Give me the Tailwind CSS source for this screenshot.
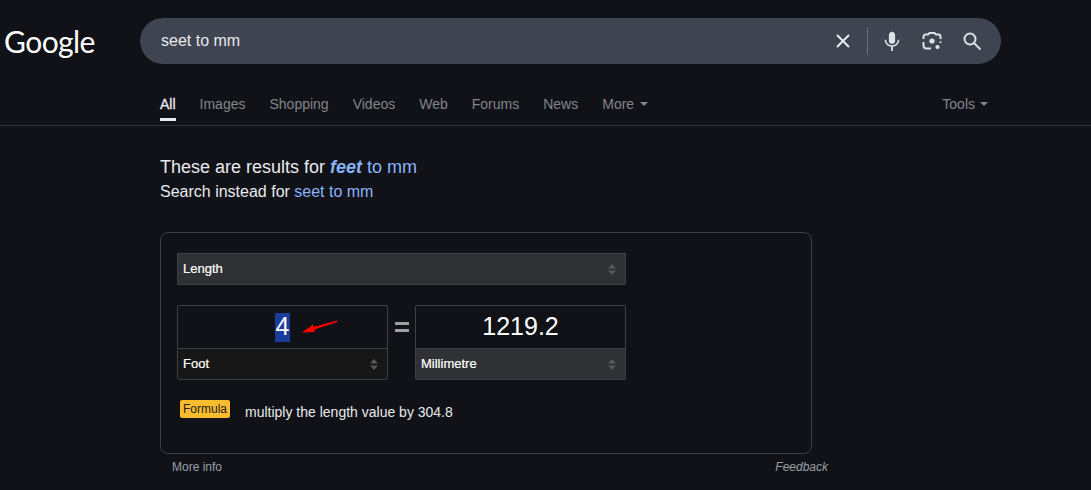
<!DOCTYPE html>
<html lang="en">
<head>
    <meta charset="UTF-8">
    <meta name="viewport" content="width=device-width, initial-scale=1.0">
    <title>seet to mm - Google Search</title>
    <script src="https://cdn.jsdelivr.net/npm/@tailwindcss/browser@4"></script>
</head>
<body class="h-[490px] overflow-hidden bg-[#101218] font-['Liberation_Sans',Arial,sans-serif] text-[#e8eaed]">

    <!-- search header -->
    <header class="flex items-center pt-[18px]">
        <div class="w-[140px] pl-[4px] font-['Lato',sans-serif] text-[30px] leading-[46px] tracking-[-0.55px] text-white">Google</div>
        <div class="flex h-[46px] w-[861px] items-center rounded-full bg-[#3f4451] pl-[21px] pr-[19px]">
            <span class="flex-1 text-base text-[#e8eaed]">seet to mm</span>
            <svg class="h-[16px] w-[16px]" viewBox="0 0 16 16" fill="none" stroke="#e8eaed" stroke-width="2"><path d="M2 2l12 12M14 2L2 14"/></svg>
            <div class="ml-[16px] mr-[13px] h-[28px] w-px bg-[#6b6f7a]"></div>
            <svg class="h-[22px] w-[22px]" viewBox="0 0 24 24" fill="#dfe1e5"><path d="M12 15c1.900 0 3.400-1.500 3.400-3.400V5.400C15.400 3.500 13.900 2 12 2S8.600 3.500 8.600 5.400v6.200C8.600 13.500 10.100 15 12 15z"/><path d="M18.300 10.600c0 3.600-2.900 6-6.300 6s-6.300-2.400-6.300-6H4c0 4.100 3.200 7.300 7 7.800V23h2v-4.600c3.800-.5 7-3.700 7-7.800h-1.700z"/></svg>
            <svg class="ml-[19px] h-[20px] w-[20px]" viewBox="0 0 20 20" fill="none" stroke="#dfe1e5" stroke-width="2"><path d="M1.500 8V5.500a2 2 0 0 1 2-2h2.500l1.500-1.500h5l1.500 1.500h2.500a2 2 0 0 1 2 2V8"/><path d="M1.500 11v3.500a3 3 0 0 0 3 3H9"/><path d="M18.500 10.500V12"/><circle cx="10" cy="10" r="2.600" fill="#dfe1e5" stroke="none"/><circle cx="15.500" cy="16" r="2.100" fill="#dfe1e5" stroke="none"/></svg>
            <svg class="ml-[20px] h-[20px] w-[20px]" viewBox="0 0 20 20" fill="none" stroke="#dfe1e5" stroke-width="2"><circle cx="8" cy="8" r="5.500"/><path d="M12 12l6.500 6.500"/></svg>
        </div>
    </header>

    <!-- tabs -->
    <nav class="flex h-[62px] items-start justify-between border-b border-[#2f3136] pl-[160px] pr-[103px] text-sm text-[#82858b]">
        <div class="flex gap-6 pt-[30px]">
            <a class="relative text-[#e8eaed] [-webkit-text-stroke:0.3px_#e8eaed]">All<span class="absolute left-0 top-[24px] h-[3px] w-[16px] bg-[#e8eaed]"></span></a>
            <a>Images</a>
            <a>Shopping</a>
            <a>Videos</a>
            <a>Web</a>
            <a>Forums</a>
            <a>News</a>
            <a class="flex items-center gap-[6px]">More <span class="h-0 w-0 border-x-[4px] border-t-[4px] border-x-transparent border-t-[#82858b]"></span></a>
        </div>
        <a class="flex items-center gap-[5px] pt-[30px]">Tools <span class="h-0 w-0 border-x-[4px] border-t-[4px] border-x-transparent border-t-[#82858b]"></span></a>
    </nav>

    <main class="pl-[160px] pt-[29px]">
        <p class="text-lg leading-6 text-[#e8eaed]">These are results for <a class="text-[#8ab4f8]"><b class="italic">feet</b> to mm</a></p>
        <p class="mt-px text-base leading-6 text-[#e8eaed]">Search instead for <a class="text-[#8ab4f8]">seet to mm</a></p>

        <!-- unit converter -->
        <section class="mt-[28px] h-[222px] w-[652px] rounded-lg border border-[#3c4043] px-4 pt-5">
            <div class="flex h-[32px] w-[449px] items-center justify-between border border-[#3c4043] bg-[#303134] pl-[5px] pr-[9px] text-[13px] text-white [-webkit-text-stroke:0.2px_#fff]">
                Length
                <svg class="h-[11px] w-[8px]" viewBox="0 0 8 11" fill="#55585c"><path d="M4 0l4 4.500H0zM4 11L0 6.500h8z"/></svg>
            </div>

            <div class="mt-5 flex w-[449px] items-start justify-between">
                <div class="h-[75px] w-[211px] overflow-hidden rounded-[2px] border border-[#3c4043]">
                    <div class="relative flex h-[43px] items-center justify-center border-b border-[#3c4043] text-[25px] text-white">
                        <span class="flex h-[29px] w-[15px] items-center justify-center bg-[#1a3c9c]">4</span>
                        <svg class="absolute left-[124px] top-[14px] h-[13px] w-[36px]" viewBox="0 0 36 13" fill="#ff0000"><path d="M0 12.500L11 4.500 11.500 7 35 .5 35.500 2 12.500 9.500 13 12z"/></svg>
                    </div>
                    <div class="flex h-[30px] items-center justify-between bg-[#171717] pl-[5px] pr-[9px] text-[13px] text-white [-webkit-text-stroke:0.2px_#fff]">
                        Foot
                        <svg class="h-[11px] w-[8px]" viewBox="0 0 8 11" fill="#55585c"><path d="M4 0l4 4.500H0zM4 11L0 6.500h8z"/></svg>
                    </div>
                </div>

                <svg class="mt-[17px] h-[10px] w-[14px]" viewBox="0 0 14 10" fill="#9aa0a6"><path d="M0 0h14v3H0zM0 7h14v3H0z"/></svg>

                <div class="h-[75px] w-[211px] overflow-hidden rounded-[2px] border border-[#3c4043]">
                    <div class="flex h-[43px] items-center justify-center border-b border-[#3c4043] text-[25px] text-white">1219.2</div>
                    <div class="flex h-[30px] items-center justify-between bg-[#303134] pl-[5px] pr-[9px] text-[13px] text-white [-webkit-text-stroke:0.2px_#fff]">
                        Millimetre
                        <svg class="h-[11px] w-[8px]" viewBox="0 0 8 11" fill="#55585c"><path d="M4 0l4 4.500H0zM4 11L0 6.500h8z"/></svg>
                    </div>
                </div>
            </div>

            <div class="mt-5 flex items-start pl-[3px]">
                <span class="flex h-[18px] w-[50px] items-center justify-center rounded-[2px] bg-[#fbbc2d] text-xs text-[#202124]">Formula</span>
                <span class="ml-[15px] pt-[2px] text-sm leading-[20px] text-[#e8eaed]">multiply the length value by 304.8</span>
            </div>
        </section>

        <div class="flex w-[668px] items-center justify-between pl-[12px] pt-[5px] text-xs leading-[16px] text-[#9aa0a6]">
            <a>More info</a>
            <a class="italic">Feedback</a>
        </div>
    </main>
</body>
</html>
